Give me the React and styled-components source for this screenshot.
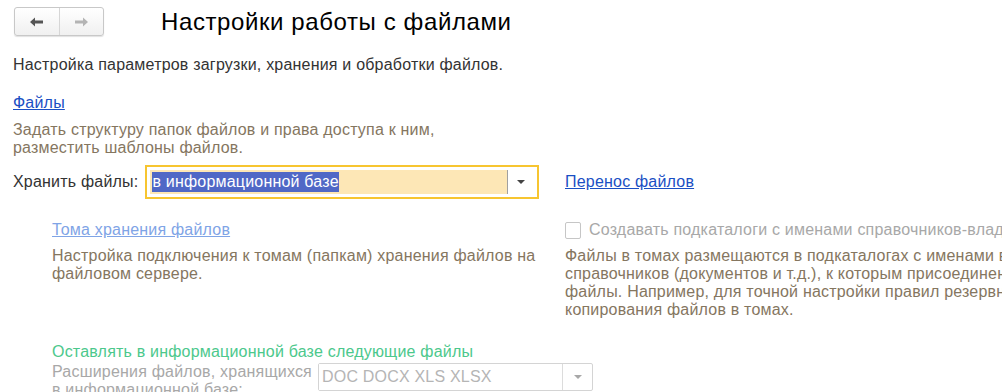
import React from 'react';
import styled, { createGlobalStyle } from 'styled-components';

const GlobalStyle = createGlobalStyle`
  html, body {
    margin: 0;
    padding: 0;
    background: #fff;
  }
  body {
    font-family: "Liberation Sans", Arial, sans-serif;
    font-size: 16px;
    letter-spacing: 0.2px;
    color: #333;
    overflow: hidden;
  }
`;

const Page = styled.div`
  width: 1002px;
  height: 392px;
  overflow: hidden;
  position: relative;
`;

const Header = styled.header`
  display: flex;
  align-items: center;
  padding: 7px 0 0 14px;
  height: 29px;
`;

const NavGroup = styled.div`
  display: flex;
  width: 90px;
  height: 29px;
  box-sizing: border-box;
  border: 1px solid #c8c8c8;
  border-radius: 3px;
  background: linear-gradient(#ffffff, #f0f0f0);
  box-shadow: 0 1px 1px rgba(0, 0, 0, 0.12);
`;

const NavButton = styled.button`
  flex: 1;
  display: flex;
  align-items: center;
  justify-content: center;
  border: 0;
  padding: 0;
  background: transparent;
  & + & {
    border-left: 1px solid #d6d6d6;
  }
`;

const Title = styled.h1`
  margin: 0 0 0 57px;
  font-size: 24px;
  letter-spacing: 0.6px;
  font-weight: normal;
  color: #000;
  line-height: 27px;
`;

const Body = styled.main`
  padding: 20px 0 0 13px;
`;

const Intro = styled.p`
  margin: 0;
  line-height: 18px;
  color: #333;
`;

const Link = styled.a`
  color: ${(p) => (p.$muted ? '#7fa4e6' : '#1a4fc4')};
  text-decoration: underline;
  cursor: pointer;
  line-height: 18px;
`;

const Block = styled.div`
  margin-top: ${(p) => p.$top || 0}px;
`;

const Hint = styled.p`
  margin: ${(p) => p.$top || 0}px 0 0;
  line-height: 18px;
  color: #85765f;
  white-space: nowrap;
`;

const Columns = styled.div`
  display: grid;
  grid-template-columns: 552px 1fr;
  align-items: center;
`;

const Row = styled.div`
  display: flex;
  align-items: center;
  gap: 7px;
`;

const Label = styled.span`
  color: ${(p) => (p.$disabled ? '#a8a8a8' : '#333')};
  line-height: 18px;
  white-space: nowrap;
`;

const Combo = styled.div`
  display: flex;
  width: ${(p) => p.$width}px;
  height: ${(p) => p.$height}px;
  box-sizing: border-box;
  border: ${(p) => (p.$focused ? '2px solid #f7c530' : '1px solid #d4d4d4')};
  border-radius: ${(p) => (p.$focused ? 0 : 2)}px;
  padding: ${(p) => (p.$focused ? '3px' : '0')};
  background: #fff;
  flex-shrink: 0;
`;

const ComboField = styled.div`
  flex: 1;
  display: flex;
  align-items: center;
  padding-left: ${(p) => (p.$focused ? 2 : 3)}px;
  background: ${(p) => (p.$focused ? '#fde7b6' : '#fff')};
  color: ${(p) => (p.$disabled ? '#b5b5b5' : '#333')};
  white-space: nowrap;
  overflow: hidden;
`;

const Selected = styled.span`
  background: #5068c6;
  color: #fff;
  line-height: 20px;
`;

const ComboArrow = styled.div`
  width: ${(p) => p.$w}px;
  display: flex;
  align-items: center;
  justify-content: center;
  border-left: 1px solid ${(p) => (p.$focused ? '#a0a0a0' : '#dcdcdc')};
  &::after {
    content: '';
    border-left: 4px solid transparent;
    border-right: 4px solid transparent;
    border-top: 4px solid ${(p) => (p.$focused ? '#444' : '#a8a8a8')};
  }
`;

const Indent = styled.div`
  padding-left: 39px;
`;

const CheckRow = styled.label`
  display: flex;
  align-items: center;
  gap: 8px;
  white-space: nowrap;
`;

const Box = styled.span`
  width: 14px;
  height: 15px;
  border: 1px solid #c6c6c6;
  border-radius: 2px;
  background: #fff;
  flex-shrink: 0;
`;

const TopAligned = styled.div`
  align-self: start;
  min-width: 0;
`;

const GroupTitle = styled.div`
  color: #4cc88c;
  line-height: 18px;
`;

const FieldRow = styled.div`
  display: flex;
  align-items: flex-start;
  gap: 5px;
  margin-top: 2px;
`;

const FieldLabel = styled.div`
  width: 261px;
  color: #a8a8a8;
  line-height: 18px;
`;

const Arrow = ({ color }) => (
  <svg width="14" height="10" viewBox="0 0 14 10">
    <path d="M0 5 L5 0.5 L5 3.5 L13 3.5 L13 6.5 L5 6.5 L5 9.5 Z" fill={color} />
  </svg>
);

export default function App() {
  return (
    <Page>
      <GlobalStyle />
      <Header>
        <NavGroup>
          <NavButton aria-label="Назад">
            <Arrow color="#555" />
          </NavButton>
          <NavButton aria-label="Вперёд">
            <span style={{ transform: 'scaleX(-1)', display: 'flex' }}>
              <Arrow color="#b4b4b4" />
            </span>
          </NavButton>
        </NavGroup>
        <Title>Настройки работы с файлами</Title>
      </Header>
      <Body>
        <Intro>Настройка параметров загрузки, хранения и обработки файлов.</Intro>

        <Block $top={20}>
          <Link>Файлы</Link>
          <Hint $top={9}>
            Задать структуру папок файлов и права доступа к ним,
            <br />
            разместить шаблоны файлов.
          </Hint>
        </Block>

        <Block $top={8}>
          <Columns>
            <Row>
              <Label>Хранить файлы:</Label>
              <Combo $focused $width={394} $height={34}>
                <ComboField $focused>
                  <Selected>в информационной базе</Selected>
                </ComboField>
                <ComboArrow $focused $w={26} />
              </Combo>
            </Row>
            <div>
              <Link>Перенос файлов</Link>
            </div>
          </Columns>
        </Block>

        <Block $top={22}>
          <Columns>
            <TopAligned>
              <Indent>
                <Link $muted>Тома хранения файлов</Link>
                <Hint $top={8}>
                  Настройка подключения к томам (папкам) хранения файлов на
                  <br />
                  файловом сервере.
                </Hint>
              </Indent>
            </TopAligned>
            <TopAligned>
              <CheckRow>
                <Box />
                <Label $disabled>Создавать подкаталоги с именами справочников-владельцев</Label>
              </CheckRow>
              <Hint $top={8}>
                Файлы в томах размещаются в подкаталогах с именами владельцев
                <br />
                справочников (документов и т.д.), к которым присоединены
                <br />
                файлы. Например, для точной настройки правил резервного
                <br />
                копирования файлов в томах.
              </Hint>
            </TopAligned>
          </Columns>
        </Block>

        <Block $top={24}>
          <Indent>
            <GroupTitle>Оставлять в информационной базе следующие файлы</GroupTitle>
            <FieldRow>
              <FieldLabel>Расширения файлов, хранящихся в информационной базе:</FieldLabel>
              <Combo $width={275} $height={28}>
                <ComboField $disabled>DOC DOCX XLS XLSX</ComboField>
                <ComboArrow $w={29} />
              </Combo>
            </FieldRow>
          </Indent>
        </Block>
      </Body>
    </Page>
  );
}
